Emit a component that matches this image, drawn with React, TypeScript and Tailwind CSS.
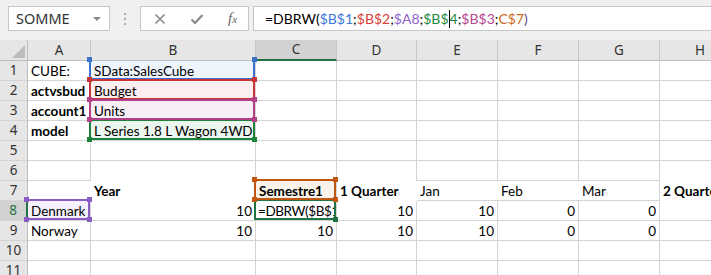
import React from "react";

type Hl = { color: string; border: string; fill: string; z: string };

const GRID = "border-[#d4d4d4]";

function Range({ hl }: { hl: Hl }) {
    const c = "absolute w-[5px] h-[5px] " + hl.color;
    return (
        <div className={`absolute left-[-2px] top-[-2px] right-0 bottom-0 border-2 pointer-events-none ${hl.z} ${hl.border}`}>
            <span className={c + " left-[-4px] top-[-4px]"} />
            <span className={c + " right-[-4px] top-[-4px]"} />
            <span className={c + " left-[-4px] bottom-[-4px]"} />
            <span className={c + " right-[-4px] bottom-[-4px]"} />
        </div>
    );
}

interface CellProps {
    children?: React.ReactNode;
    right?: boolean;
    bold?: boolean;
    noR?: boolean;
    noB?: boolean;
    clip?: boolean;
    hl?: Hl;
}

function Cell({ children, right, bold, noR, noB, clip = true, hl }: CellProps) {
    return (
        <div
            className={`relative box-border h-[20px] whitespace-nowrap text-[13.5px] text-black ${GRID} ${noR ? "" : "border-r"} ${noB ? "" : "border-b"} ${bold ? "font-bold" : ""} ${hl ? hl.fill : ""}`}
        >
            <div className={`px-[3px] pt-[1px] leading-[19px] ${clip ? "overflow-hidden" : ""} ${right ? "text-right" : ""}`}>
                {children}
            </div>
            {hl && <Range hl={hl} />}
        </div>
    );
}

function RowHead({ n, active }: { n: number; active?: boolean }) {
    return (
        <div
            className={`box-border h-[20px] flex items-center justify-center text-[13.5px] border-b border-[#d4d4d4] ${active ? "bg-[#d2d2d2] text-[#217346] border-r-2 border-r-[#217346]" : "bg-[#e6e6e6] text-[#333] border-r border-r-[#bdbdbd]"}`}
            style={{ fontFamily: "'Noto Sans', 'Open Sans', sans-serif" }}
        >
            {n}
        </div>
    );
}

function ColHead({ l, active }: { l: string; active?: boolean }) {
    return (
        <div
            className={`box-border h-[21px] flex items-center justify-center text-[13.5px] text-[#333] border-r border-r-[#c8c8c8] ${active ? "bg-[#d2d2d2] border-b-2 border-b-[#217346]" : "bg-[#e6e6e6] border-b border-b-[#bdbdbd]"}`}
            style={{ fontFamily: "'Noto Sans', 'Open Sans', sans-serif" }}
        >
            {l}
        </div>
    );
}

const blue: Hl = { color: "bg-[#3b72cf]", border: "border-[#3b72cf] border-t-transparent", fill: "bg-[#eef5fd]", z: "z-10" };
const red: Hl = { color: "bg-[#c8363a]", border: "border-[#c8363a]", fill: "bg-[#fdeff0]", z: "z-20" };
const magenta: Hl = { color: "bg-[#b3418a]", border: "border-[#b3418a]", fill: "bg-[#f8eff6]", z: "z-40" };
const green: Hl = { color: "bg-[#21803a]", border: "border-[#21803a]", fill: "bg-[#ebf6ee]", z: "z-30" };
const purple: Hl = { color: "bg-[#8c5cc6]", border: "border-[#8c5cc6] border-l-transparent", fill: "bg-[#f5f0fb]", z: "z-10" };
const orange: Hl = { color: "bg-[#c2560f]", border: "border-[#c2560f]", fill: "bg-[#f9f3ea]", z: "z-40" };

function Blank({ n }: { n: number }) {
    return (
        <>
            {Array.from({ length: n }).map((_, i) => (
                <Cell key={i} />
            ))}
        </>
    );
}

export default function App() {
    const cols = ["A", "B", "C", "D", "E", "F", "G", "H"];
    return (
        <div
            className="w-[711px] h-[275px] overflow-hidden bg-white"
            style={{ fontFamily: "Lato, 'Liberation Sans', sans-serif" }}
        >
            {/* formula bar */}
            <div className="h-[40px] bg-[#f0f0f0] flex items-start pt-[6px]">
                <div
                    className="ml-[8px] w-[102px] h-[25px] bg-white border border-[#c6c6c6] flex items-center justify-between pl-[7px] pr-[8px] text-[14.5px] text-[#333]"
                    style={{ fontFamily: "'Noto Sans', 'Open Sans', sans-serif" }}
                >
                    <span>SOMME</span>
                    <span className="w-0 h-0 border-l-[4px] border-r-[4px] border-t-[4px] border-l-transparent border-r-transparent border-t-[#888]" />
                </div>
                <div className="w-[30px] h-[25px] flex flex-col items-center justify-center gap-[3px]">
                    <span className="w-[2px] h-[2px] bg-[#aaa]" />
                    <span className="w-[2px] h-[2px] bg-[#aaa]" />
                    <span className="w-[2px] h-[2px] bg-[#aaa]" />
                </div>
                <div className="w-[109px] h-[25px] bg-white border border-[#c6c6c6] flex items-center gap-[24px] pl-[13px]">
                    <svg width="12" height="12" viewBox="0 0 12 12">
                        <path d="M1.5 1.5 L10.5 10.5 M10.5 1.5 L1.5 10.5" stroke="#888" strokeWidth="1.6" />
                    </svg>
                    <svg width="14" height="12" viewBox="0 0 14 12">
                        <path d="M1.5 6.5 L5 10 L12.5 2" stroke="#888" strokeWidth="2.2" fill="none" />
                    </svg>
                    <span className="text-[15px] italic text-[#666]" style={{ fontFamily: "'Liberation Serif', serif" }}>
                        f<span className="text-[11px]">x</span>
                    </span>
                </div>
                <div className="ml-[4px] flex-1 h-[25px] bg-white border border-r-0 border-[#c6c6c6] flex items-center pl-[11px] text-[14px] text-black whitespace-nowrap">
                    <span>=DBRW(</span>
                    <span className="text-[#3b78d8]">$B$1</span>
                    <span>;</span>
                    <span className="text-[#e0403a]">$B$2</span>
                    <span>;</span>
                    <span className="text-[#8e63ce]">$A8</span>
                    <span>;</span>
                    <span className="text-[#1f8a3c]">$B$</span>
                    <span className="inline-block w-[1px] h-[18px] bg-black" />
                    <span className="text-[#1f8a3c]">4</span>
                    <span>;</span>
                    <span className="text-[#b8468f]">$B$3</span>
                    <span>;</span>
                    <span className="text-[#d06820]">C$7</span>
                    <span className="text-[#5a4a8a]">)</span>
                </div>
            </div>

            {/* sheet */}
            <div className="grid grid-cols-[28px_63px_165px_81px_80px_81px_81px_81px_81px]">
                <div className="box-border h-[21px] bg-[#e6e6e6] border-r border-b border-[#bdbdbd] flex items-end justify-end pr-[2px] pb-[2px]">
                    <svg width="13" height="13" viewBox="0 0 13 13">
                        <path d="M13 0 L13 13 L0 13 Z" fill="#bcbcbc" />
                    </svg>
                </div>
                {cols.map((c) => (
                    <ColHead key={c} l={c} active={c === "C"} />
                ))}

                {/* row 1 */}
                <RowHead n={1} />
                <Cell>CUBE:</Cell>
                <Cell hl={blue}>SData:SalesCube</Cell>
                <Blank n={6} />

                {/* row 2 */}
                <RowHead n={2} />
                <Cell bold>actvsbud</Cell>
                <Cell hl={red}>Budget</Cell>
                <Blank n={6} />

                {/* row 3 */}
                <RowHead n={3} />
                <Cell bold>account1</Cell>
                <Cell hl={magenta}>Units</Cell>
                <Blank n={6} />

                {/* row 4 */}
                <RowHead n={4} />
                <Cell bold>model</Cell>
                <Cell hl={green}>L Series 1.8 L Wagon 4WD</Cell>
                <Blank n={6} />

                {/* row 5 */}
                <RowHead n={5} />
                <Blank n={8} />

                {/* row 6 */}
                <RowHead n={6} />
                <Cell />
                <Cell noB />
                <Cell noB />
                <Cell noB />
                <Cell />
                <Cell />
                <Cell />
                <Cell noB />

                {/* row 7 */}
                <RowHead n={7} />
                <Cell noR noB />
                <Cell noR noB bold>Year</Cell>
                <Cell bold hl={orange}>Semestre1</Cell>
                <Cell noR noB bold clip={false}>1 Quarter</Cell>
                <Cell noR>Jan</Cell>
                <Cell noR>Feb</Cell>
                <Cell>Mar</Cell>
                <Cell noR noB bold clip={false}>2 Quarter</Cell>

                {/* row 8 */}
                <RowHead n={8} active />
                <Cell hl={purple}>Denmark</Cell>
                <Cell right>10</Cell>
                <div className="relative box-border h-[20px] whitespace-nowrap text-[13.5px] text-black border-r border-b border-[#d4d4d4]">
                    <div className="overflow-hidden px-[2px] pt-[1px] leading-[19px] tracking-[-0.4px]">=DBRW($B$1;$B$2</div>
                    <div className="absolute left-[-2px] top-[-2px] right-0 bottom-0 border-2 border-[#217346] z-30 pointer-events-none">
                        <span className="absolute right-[-4px] bottom-[-4px] w-[5px] h-[5px] bg-[#217346]" />
                    </div>
                </div>
                <Cell right>10</Cell>
                <Cell right>10</Cell>
                <Cell right>0</Cell>
                <Cell right>0</Cell>
                <Cell />

                {/* row 9 */}
                <RowHead n={9} />
                <Cell>Norway</Cell>
                <Cell right>10</Cell>
                <Cell right>10</Cell>
                <Cell right>10</Cell>
                <Cell right>10</Cell>
                <Cell right>0</Cell>
                <Cell right>0</Cell>
                <Cell />

                {/* row 10 */}
                <RowHead n={10} />
                <Blank n={8} />

                {/* row 11 */}
                <RowHead n={11} />
                <Blank n={8} />
            </div>
        </div>
    );
}
